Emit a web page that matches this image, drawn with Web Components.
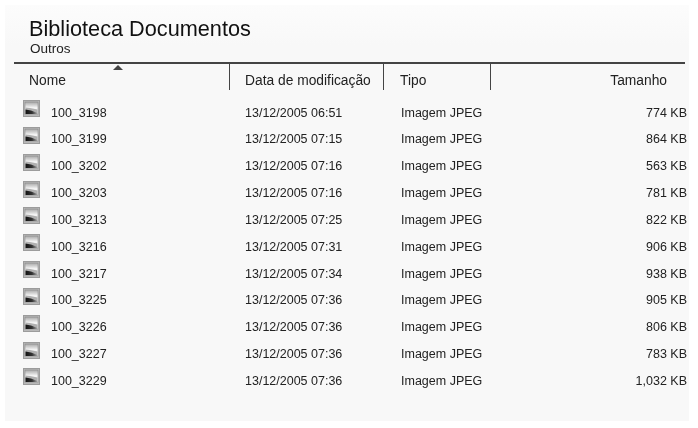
<!DOCTYPE html>
<html>
<head>
<meta charset="utf-8">
<title>Biblioteca Documentos</title>
<style>
html, body { margin: 0; background: #fff; }
body { font-family: "Liberation Sans", Arial, sans-serif; color: #111; }
</style>
</head>
<body>
<library-panel title-text="Biblioteca Documentos" subtitle="Outros">
	<file-row name="100_3198" date="13/12/2005 06:51" size="774 KB"></file-row>
	<file-row name="100_3199" date="13/12/2005 07:15" size="864 KB"></file-row>
	<file-row name="100_3202" date="13/12/2005 07:16" size="563 KB"></file-row>
	<file-row name="100_3203" date="13/12/2005 07:16" size="781 KB"></file-row>
	<file-row name="100_3213" date="13/12/2005 07:25" size="822 KB"></file-row>
	<file-row name="100_3216" date="13/12/2005 07:31" size="906 KB"></file-row>
	<file-row name="100_3217" date="13/12/2005 07:34" size="938 KB"></file-row>
	<file-row name="100_3225" date="13/12/2005 07:36" size="905 KB"></file-row>
	<file-row name="100_3226" date="13/12/2005 07:36" size="806 KB"></file-row>
	<file-row name="100_3227" date="13/12/2005 07:36" size="783 KB"></file-row>
	<file-row name="100_3229" date="13/12/2005 07:36" size="1,032 KB"></file-row>
</library-panel>
<script>
const panelTemplate = document.createElement('template');
panelTemplate.innerHTML = `
<style>
:host {
	display: block;
	box-sizing: border-box;
	width: 684px;
	height: 416px;
	margin: 5px 0 0 5px;
	background: linear-gradient(#fcfcfc, #f8f8f8 40px);
	filter: blur(0.35px);
}
header {
	box-sizing: border-box;
	height: 57px;
	padding: 12px 0 0 24px;
}
h1 {
	margin: 0;
	font-size: 21.7px;
	font-weight: normal;
	line-height: 24px;
	color: #111;
}
p {
	margin: 1px 0 0 1px;
	font-size: 13.5px;
	line-height: 14px;
	color: #222;
}
.columns {
	display: grid;
	grid-template-columns: 216px 154px 107px 194px;
	height: 26px;
	margin-left: 9px;
	width: 671px;
	border-top: 2px solid #444;
	font-size: 13.8px;
	color: #222;
}
.columns div {
	position: relative;
	display: flex;
	align-items: center;
	padding-top: 6px;
	box-sizing: border-box;
	border-right: 1px solid #444;
}
.columns div:nth-child(1) { padding-left: 15px; }
.columns div:nth-child(2) { padding-left: 15px; }
.columns div:nth-child(3) { padding-left: 16px; }
.columns div:nth-child(4) { border-right: 0; justify-content: flex-end; padding-right: 18px; }
.arrow {
	position: absolute;
	top: 1px;
	left: 99px;
	width: 0;
	height: 0;
	border-left: 5px solid transparent;
	border-right: 5px solid transparent;
	border-bottom: 5px solid #444;
}
.rows {
	padding-top: 9px;
}
</style>
<header>
	<h1 id="title"></h1>
	<p id="subtitle"></p>
</header>
<div class="columns">
	<div>Nome<span class="arrow"></span></div>
	<div>Data de modificação</div>
	<div>Tipo</div>
	<div>Tamanho</div>
</div>
<div class="rows"><slot></slot></div>
`;

class LibraryPanel extends HTMLElement {
	constructor() {
		super();
		const shadowRoot = this.attachShadow({mode: 'open'});
		shadowRoot.appendChild(panelTemplate.content.cloneNode(true));
	}

	connectedCallback() {
		this.shadowRoot.querySelector('#title').textContent = this.getAttribute('title-text');
		this.shadowRoot.querySelector('#subtitle').textContent = this.getAttribute('subtitle');
	}
}
customElements.define('library-panel', LibraryPanel);

const rowTemplate = document.createElement('template');
rowTemplate.innerHTML = `
<style>
:host {
	display: block;
	height: 26.85px;
	font-size: 12.5px;
	color: #222;
}
.row {
	display: grid;
	grid-template-columns: 18px 204px 156px 100px 1fr;
	height: 100%;
	padding-left: 18px;
	width: 664px;
	align-items: start;
	line-height: 14px;
}
svg { display: block; margin-top: 1px; }
.name { padding: 6.5px 0 0 10px; }
.date { padding: 6.5px 0 0 0; }
.type { padding: 6.5px 0 0 0; }
.size { padding: 6.5px 0 0 0; text-align: right; }
</style>
<div class="row">
	<svg width="17" height="17" viewBox="0 0 17 17">
		<defs>
			<linearGradient id="sky" x1="0" y1="0" x2="0" y2="1">
				<stop offset="0" stop-color="#a8a8a8"/>
				<stop offset="0.45" stop-color="#f4f4f4"/>
			</linearGradient>
			<linearGradient id="ground" x1="0" y1="0" x2="1" y2="0">
				<stop offset="0" stop-color="#111"/>
				<stop offset="0.55" stop-color="#333"/>
				<stop offset="1" stop-color="#aaa"/>
			</linearGradient>
		</defs>
		<rect x="0" y="0" width="17" height="17" fill="#b8b8b8"/>
		<rect x="0.5" y="0.5" width="16" height="16" fill="none" stroke="#9c9c9c"/>
		<rect x="2" y="2" width="13" height="12.5" fill="url(#sky)" stroke="#808080" stroke-width="0.5"/>
		<path d="M2.5 7.5 L7 8 L14.5 9.5 V14 H2.5 Z" fill="#b0b0b0"/>
		<path d="M2.5 9.5 L8 10.5 L14.5 13 V14 H2.5 Z" fill="url(#ground)"/>
	</svg>
	<div class="name"></div>
	<div class="date"></div>
	<div class="type">Imagem JPEG</div>
	<div class="size"></div>
</div>
`;

class FileRow extends HTMLElement {
	constructor() {
		super();
		const shadowRoot = this.attachShadow({mode: 'open'});
		shadowRoot.appendChild(rowTemplate.content.cloneNode(true));
	}

	connectedCallback() {
		this.shadowRoot.querySelector('.name').textContent = this.getAttribute('name');
		this.shadowRoot.querySelector('.date').textContent = this.getAttribute('date');
		this.shadowRoot.querySelector('.size').textContent = this.getAttribute('size');
	}
}
customElements.define('file-row', FileRow);
</script>
</body>
</html>
